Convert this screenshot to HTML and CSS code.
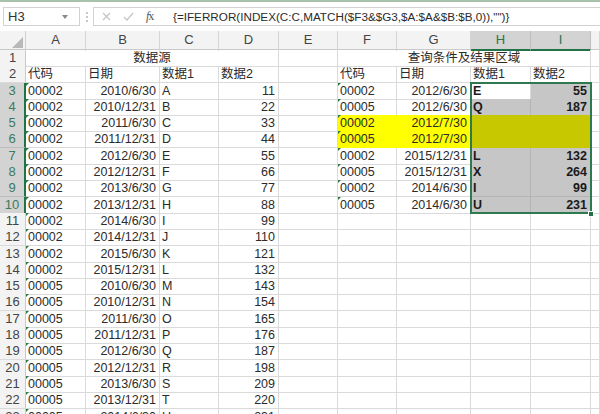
FILE: index.html
```html
<!DOCTYPE html>
<html>
<head>
<meta charset="utf-8">
<link rel="stylesheet" href="styles.css">
</head>
<body>
<div class="app">
  <div class="topline"></div>
  <div class="fbar">
    <div class="namebox"><span>H3</span><svg class="dd" width="6" height="4" viewBox="0 0 6 4"><path d="M0 0H6L3 4Z" fill="#8a8a8a"/></svg></div>
    <div class="dots"><span></span><span></span><span></span></div>
    <div class="formula">
      <div class="fbtns">
        <svg width="9" height="9" viewBox="0 0 9 9"><path d="M1 1L8 8M8 1L1 8" stroke="#c4c4c4" stroke-width="1.2" fill="none"/></svg>
        <svg width="11" height="9" viewBox="0 0 11 9"><path d="M1 5L4 8L10 1" stroke="#c4c4c4" stroke-width="1.2" fill="none"/></svg>
        <span class="fx"><i>f</i>x</span>
      </div>
      <div class="ftext">{=IFERROR(INDEX(C:C,MATCH($F3&amp;$G3,$A:$A&amp;$B:$B,0)),"")}</div>
    </div>
  </div>
  <div class="sheet">
    <div class="row hdr">
      <div class="corner"><svg width="11" height="11" viewBox="0 0 11 11"><path d="M11 0V11H0Z" fill="#b9b9b9"/></svg></div>
      <div class="ch">A</div><div class="ch">B</div><div class="ch">C</div><div class="ch">D</div><div class="ch">E</div><div class="ch">F</div><div class="ch">G</div><div class="ch sel">H</div><div class="ch sel">I</div><div class="ch"></div>
    </div>
    <div class="row">
      <div class="rh">1</div><div class="c m4 ctr">数据源</div><div class="c"></div><div class="c m4 ctr">查询条件及结果区域</div><div class="c"></div>
    </div>
    <div class="row">
      <div class="rh">2</div><div class="c">代码</div><div class="c">日期</div><div class="c">数据1</div><div class="c">数据2</div><div class="c"></div><div class="c">代码</div><div class="c">日期</div><div class="c">数据1</div><div class="c">数据2</div><div class="c"></div>
    </div>
    <div class="row">
      <div class="rh sr">3</div><div class="c t">00002</div><div class="c r">2010/6/30</div><div class="c">A</div><div class="c r">11</div><div class="c"></div><div class="c t">00002</div><div class="c r">2012/6/30</div><div class="c b">E</div><div class="c r b s">55</div><div class="c"></div>
    </div>
    <div class="row">
      <div class="rh sr">4</div><div class="c t">00002</div><div class="c r">2010/12/31</div><div class="c">B</div><div class="c r">22</div><div class="c"></div><div class="c t">00005</div><div class="c r">2012/6/30</div><div class="c b s">Q</div><div class="c r b s">187</div><div class="c"></div>
    </div>
    <div class="row">
      <div class="rh sr">5</div><div class="c t">00002</div><div class="c r">2011/6/30</div><div class="c">C</div><div class="c r">33</div><div class="c"></div><div class="c t y">00002</div><div class="c r y">2012/7/30</div><div class="c o"></div><div class="c o"></div><div class="c"></div>
    </div>
    <div class="row">
      <div class="rh sr">6</div><div class="c t">00002</div><div class="c r">2011/12/31</div><div class="c">D</div><div class="c r">44</div><div class="c"></div><div class="c t y">00005</div><div class="c r y">2012/7/30</div><div class="c o"></div><div class="c o"></div><div class="c"></div>
    </div>
    <div class="row">
      <div class="rh sr">7</div><div class="c t">00002</div><div class="c r">2012/6/30</div><div class="c">E</div><div class="c r">55</div><div class="c"></div><div class="c t">00002</div><div class="c r">2015/12/31</div><div class="c b s">L</div><div class="c r b s">132</div><div class="c"></div>
    </div>
    <div class="row">
      <div class="rh sr">8</div><div class="c t">00002</div><div class="c r">2012/12/31</div><div class="c">F</div><div class="c r">66</div><div class="c"></div><div class="c t">00005</div><div class="c r">2015/12/31</div><div class="c b s">X</div><div class="c r b s">264</div><div class="c"></div>
    </div>
    <div class="row">
      <div class="rh sr">9</div><div class="c t">00002</div><div class="c r">2013/6/30</div><div class="c">G</div><div class="c r">77</div><div class="c"></div><div class="c t">00002</div><div class="c r">2014/6/30</div><div class="c b s">I</div><div class="c r b s">99</div><div class="c"></div>
    </div>
    <div class="row">
      <div class="rh sr">10</div><div class="c t">00002</div><div class="c r">2013/12/31</div><div class="c">H</div><div class="c r">88</div><div class="c"></div><div class="c t">00005</div><div class="c r">2014/6/30</div><div class="c b s">U</div><div class="c r b s">231</div><div class="c"></div>
    </div>
    <div class="row">
      <div class="rh">11</div><div class="c t">00002</div><div class="c r">2014/6/30</div><div class="c">I</div><div class="c r">99</div><div class="c"></div><div class="c"></div><div class="c"></div><div class="c"></div><div class="c"></div><div class="c"></div>
    </div>
    <div class="row">
      <div class="rh">12</div><div class="c t">00002</div><div class="c r">2014/12/31</div><div class="c">J</div><div class="c r">110</div><div class="c"></div><div class="c"></div><div class="c"></div><div class="c"></div><div class="c"></div><div class="c"></div>
    </div>
    <div class="row">
      <div class="rh">13</div><div class="c t">00002</div><div class="c r">2015/6/30</div><div class="c">K</div><div class="c r">121</div><div class="c"></div><div class="c"></div><div class="c"></div><div class="c"></div><div class="c"></div><div class="c"></div>
    </div>
    <div class="row">
      <div class="rh">14</div><div class="c t">00002</div><div class="c r">2015/12/31</div><div class="c">L</div><div class="c r">132</div><div class="c"></div><div class="c"></div><div class="c"></div><div class="c"></div><div class="c"></div><div class="c"></div>
    </div>
    <div class="row">
      <div class="rh">15</div><div class="c t">00005</div><div class="c r">2010/6/30</div><div class="c">M</div><div class="c r">143</div><div class="c"></div><div class="c"></div><div class="c"></div><div class="c"></div><div class="c"></div><div class="c"></div>
    </div>
    <div class="row">
      <div class="rh">16</div><div class="c t">00005</div><div class="c r">2010/12/31</div><div class="c">N</div><div class="c r">154</div><div class="c"></div><div class="c"></div><div class="c"></div><div class="c"></div><div class="c"></div><div class="c"></div>
    </div>
    <div class="row">
      <div class="rh">17</div><div class="c t">00005</div><div class="c r">2011/6/30</div><div class="c">O</div><div class="c r">165</div><div class="c"></div><div class="c"></div><div class="c"></div><div class="c"></div><div class="c"></div><div class="c"></div>
    </div>
    <div class="row">
      <div class="rh">18</div><div class="c t">00005</div><div class="c r">2011/12/31</div><div class="c">P</div><div class="c r">176</div><div class="c"></div><div class="c"></div><div class="c"></div><div class="c"></div><div class="c"></div><div class="c"></div>
    </div>
    <div class="row">
      <div class="rh">19</div><div class="c t">00005</div><div class="c r">2012/6/30</div><div class="c">Q</div><div class="c r">187</div><div class="c"></div><div class="c"></div><div class="c"></div><div class="c"></div><div class="c"></div><div class="c"></div>
    </div>
    <div class="row">
      <div class="rh">20</div><div class="c t">00005</div><div class="c r">2012/12/31</div><div class="c">R</div><div class="c r">198</div><div class="c"></div><div class="c"></div><div class="c"></div><div class="c"></div><div class="c"></div><div class="c"></div>
    </div>
    <div class="row">
      <div class="rh">21</div><div class="c t">00005</div><div class="c r">2013/6/30</div><div class="c">S</div><div class="c r">209</div><div class="c"></div><div class="c"></div><div class="c"></div><div class="c"></div><div class="c"></div><div class="c"></div>
    </div>
    <div class="row">
      <div class="rh">22</div><div class="c t">00005</div><div class="c r">2013/12/31</div><div class="c">T</div><div class="c r">220</div><div class="c"></div><div class="c"></div><div class="c"></div><div class="c"></div><div class="c"></div><div class="c"></div>
    </div>
    <div class="row">
      <div class="rh">23</div><div class="c t">00005</div><div class="c r">2014/6/30</div><div class="c">U</div><div class="c r">231</div><div class="c"></div><div class="c"></div><div class="c"></div><div class="c"></div><div class="c"></div><div class="c"></div>
    </div>
    <div class="selbox"></div>
    <div class="handle"></div>
  </div>
</div>
</body>
</html>
```
FILE: styles.css
```css
* { box-sizing: border-box; margin: 0; padding: 0; }
body {
  margin: 0;
  width: 600px;
  height: 414px;
  overflow: hidden;
  background: #fff;
  font-family: "Liberation Sans", "Noto Sans CJK SC", sans-serif;
  color: #2b2b2b;
}
.app { width: 600px; height: 414px; overflow: hidden; }
.topline { height: 2px; background: #a8c2ac; }
.fbar {
  height: 29px;
  display: flex;
  align-items: center;
  padding-left: 3px;
  background: #fff;
}
.namebox {
  width: 77px;
  height: 19px;
  border: 1px solid #d2d2d2;
  display: flex;
  align-items: center;
  justify-content: space-between;
  padding: 0 11px 0 4px;
  font-size: 13px;
  color: #333;
}
.dots {
  width: 13px;
  display: flex;
  flex-direction: column;
  align-items: center;
  gap: 2px;
}
.dots span { width: 2px; height: 2px; background: #c8c8c8; }
.formula {
  flex: 1;
  height: 19px;
  border: 1px solid #d2d2d2;
  border-right: none;
  display: flex;
  align-items: center;
}
.fbtns {
  width: 77px;
  display: flex;
  align-items: center;
  padding-left: 8px;
  gap: 12px;
}
.fx { font-family: "Liberation Serif", serif; font-size: 12px; color: #555; letter-spacing: -1px; }
.ftext { font-size: 11.7px; color: #2b2b2b; padding-left: 2px; white-space: nowrap; }

.sheet { position: relative; }
.row {
  display: grid;
  grid-template-columns: 26px 60px 74px 59px 60px 59px 59px 74px 60px 60px 1fr;
  height: 16.3px;
}
.hdr { height: 19px; background: #f3f3f3; border-bottom: 1px solid #c9c9c9; }
.corner {
  display: flex;
  align-items: flex-end;
  justify-content: flex-end;
  padding: 0 2px 3px 0;
  border-right: 1px solid #d0d0d0;
}
.ch {
  font-size: 13px;
  color: #444;
  text-align: center;
  line-height: 18px;
  border-right: 1px solid #d5d5d5;
}
.ch.sel { background: #d3d3d3; color: #26764a; border-bottom: 2px solid #217346; border-right-color: #bdbdbd; }
.rh {
  background: #f3f3f3;
  font-size: 13px;
  color: #444;
  text-align: center;
  line-height: 16px;
  border-right: 1px solid #c9c9c9;
  border-bottom: 1px solid #dadada;
}
.rh.sr { background: #d3d3d3; color: #3d7a57; border-right: 2px solid #217346; border-bottom-color: #bdbdbd; }
.c {
  position: relative;
  font-size: 12.5px;
  line-height: 15px;
  padding: 1px 2px 0 2px;
  white-space: nowrap;
  overflow: hidden;
  border-right: 1px solid #dadada;
  border-bottom: 1px solid #dadada;
}
.m4 { grid-column: span 4; overflow: visible; }
.ctr { text-align: center; }
.r { text-align: right; padding-right: 3px; }
.b { font-weight: bold; color: #1a1a1a; }
.t::before {
  content: "";
  position: absolute;
  left: 0;
  top: 0;
  border-top: 3px solid #2a7a40;
  border-right: 3px solid transparent;
}
.y { background: #ffff00; border-color: #ffff00; }
.s { background: #c6c6c6; border-color: #b4b4b4; }
.o { background: #c8c800; border-color: #c8c800; }
.selbox {
  position: absolute;
  left: 470px;
  top: 50.6px;
  width: 122px;
  height: 132.4px;
  border: 2px solid #2d7a50;
}
.handle {
  position: absolute;
  left: 588px;
  top: 179.6px;
  width: 6px;
  height: 6px;
  background: #217346;
  border: 1px solid #fff;
}
```
